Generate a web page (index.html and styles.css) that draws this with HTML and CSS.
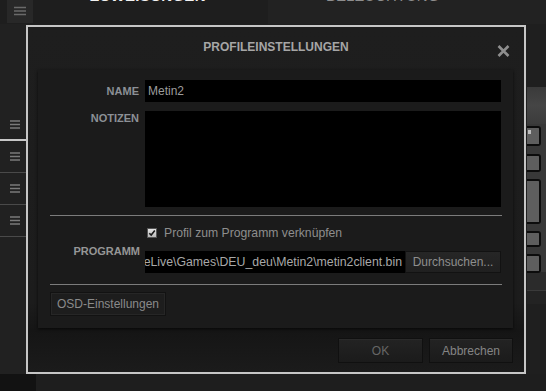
FILE: index.html
```html
<!DOCTYPE html>
<html lang="de">
<head>
<meta charset="utf-8">
<title>Profileinstellungen</title>
<link rel="stylesheet" href="styles.css">
</head>
<body>
<div class="app">
  <header class="tabs">
    <div class="tab tab-left">
      <div class="menu-btn">
        <svg width="12" height="10" viewBox="0 0 12 10"><path d="M0 1.5h12M0 5h12M0 8.5h12" stroke="#6a6a6a" stroke-width="1.6"/></svg>
      </div>
      <span class="tab-title active">ZUWEISUNGEN</span>
    </div>
    <div class="tab tab-right">
      <span class="tab-title">BELEUCHTUNG</span>
    </div>
  </header>
  <div class="workspace">
    <nav class="sidebar">
      <div class="side-item selected"><svg width="10" height="9" viewBox="0 0 10 9"><path d="M0 1h10M0 4.5h10M0 8h10" stroke="#7a7a7a" stroke-width="1.5"/></svg></div>
      <div class="side-item"><svg width="10" height="9" viewBox="0 0 10 9"><path d="M0 1h10M0 4.5h10M0 8h10" stroke="#7a7a7a" stroke-width="1.5"/></svg></div>
      <div class="side-item"><svg width="10" height="9" viewBox="0 0 10 9"><path d="M0 1h10M0 4.5h10M0 8h10" stroke="#7a7a7a" stroke-width="1.5"/></svg></div>
      <div class="side-item"><svg width="10" height="9" viewBox="0 0 10 9"><path d="M0 1h10M0 4.5h10M0 8h10" stroke="#7a7a7a" stroke-width="1.5"/></svg></div>
    </nav>
    <main class="canvas">
      <div class="kbd">
        <div class="kbd-top"></div>
        <div class="kbd-keys">
          <div class="key k1"><span class="key-mark"></span></div>
          <div class="key k2"></div>
          <div class="key k3"></div>
          <div class="key k4"></div>
          <div class="key k5"></div>
        </div>
        <div class="kbd-base"></div>
        <div class="kbd-foot"></div>
      </div>
    </main>
  </div>
  <footer class="statusbar"><div class="status-left"></div></footer>
</div>

<div class="dialog">
  <div class="dlg-title">
    PROFILEINSTELLUNGEN
    <svg class="close" width="13" height="12" viewBox="0 0 13 12"><path d="M1.5 1L11.5 11M11.5 1L1.5 11" stroke="#8e8e8e" stroke-width="2.6"/></svg>
  </div>
  <div class="panel">
    <div class="grid">
      <label class="lbl lbl-mid">NAME</label>
      <div class="field name-field">Metin2</div>
      <label class="lbl lbl-top">NOTIZEN</label>
      <div class="field notes-field"></div>
    </div>
    <div class="sep sep1"></div>
    <div class="grid prog-grid">
      <label class="lbl lbl-span">PROGRAMM</label>
      <div class="check-row">
        <span class="checkbox"><svg width="8" height="8" viewBox="0 0 8 8"><path d="M1.3 4.2L3.2 6.1L6.8 1.6" stroke="#1a1a1a" stroke-width="1.6" fill="none"/></svg></span>
        <span class="check-label">Profil zum Programm verknüpfen</span>
      </div>
      <div class="path-row">
        <div class="field path-field"><span class="path-text">C:\Program Files (x86)\GameforgeLive\Games\DEU_deu\Metin2\metin2client.bin</span></div>
        <div class="btn browse">Durchsuchen...</div>
      </div>
    </div>
    <div class="sep sep2"></div>
    <div class="btn osd">OSD-Einstellungen</div>
  </div>
  <div class="dlg-footer">
    <div class="btn foot-btn ok">OK</div>
    <div class="btn foot-btn cancel">Abbrechen</div>
  </div>
</div>
</body>
</html>
```
FILE: styles.css
```css
* { box-sizing: border-box; }
html, body {
  margin: 0;
  padding: 0;
  width: 546px;
  height: 391px;
  overflow: hidden;
  background: #202020;
  font-family: "Liberation Sans", Arial, sans-serif;
}
.app {
  display: flex;
  flex-direction: column;
  height: 391px;
}
.tabs {
  display: flex;
  height: 24px;
  flex: none;
}
.tab {
  display: flex;
  align-items: flex-start;
  overflow: hidden;
}
.tab-left {
  width: 268px;
  background: #1e1e1e;
}
.tab-right {
  flex: 1;
  background: #222222;
}
.menu-btn {
  width: 26px;
  height: 23px;
  margin-left: 7px;
  background: #282828;
  display: flex;
  justify-content: center;
  padding-top: 6px;
}
.tab-title {
  font-size: 15px;
  line-height: 15px;
  margin-top: -12px;
  color: #8e8e8e;
  white-space: nowrap;
}
.tab-left .tab-title {
  margin-left: 57px;
  font-weight: bold;
  color: #f2f2f2;
  letter-spacing: 0.3px;
}
.tab-right .tab-title {
  margin-left: 58px;
}
.workspace {
  flex: 1;
  display: flex;
  min-height: 0;
}
.sidebar {
  width: 26px;
  flex: none;
  background: #212121;
  padding-top: 85px;
}
.side-item {
  height: 32px;
  display: flex;
  align-items: center;
  justify-content: center;
  padding-left: 4px;
  border-bottom: 1px solid #4a4a4a;
}
.side-item.selected {
  border-bottom: 2px solid #c8c8c8;
}
.canvas {
  flex: 1;
  background: #1f1f1f;
  display: flex;
  justify-content: flex-end;
}
.kbd {
  width: 19px;
  margin-top: 63px;
  display: flex;
  flex-direction: column;
}
.kbd-top {
  height: 37px;
  background: linear-gradient(180deg, #3a3a3a, #454545 50%, #3c3c3c);
}
.kbd-keys {
  background: #383838;
  padding-top: 2px;
  height: 148px;
}
.key {
  position: relative;
  width: 14px;
  background: #5e5e5e;
  border: 2px solid #0c0c0c;
  border-left: none;
  border-radius: 0 3px 3px 0;
}
.key-mark {
  position: absolute;
  left: 1px;
  top: 2px;
  width: 3px;
  height: 4px;
  background: #bdbdbd;
}
.k1 { height: 20px; }
.k2 { height: 18px; margin-top: 8px; }
.k3 { height: 45px; margin-top: 7px; }
.k4 { height: 16px; margin-top: 7px; }
.k5 { height: 19px; margin-top: 7px; }
.kbd-base {
  height: 19px;
  background: #2b2b2b;
  border-bottom: 1px solid #3a3a3a;
}
.kbd-foot {
  height: 13px;
  background: #232323;
}
.statusbar {
  height: 17px;
  flex: none;
  background: #1e1e1e;
  display: flex;
}
.status-left {
  width: 36px;
  background: #121212;
}

/* dialog */
.dialog {
  position: absolute;
  left: 26px;
  top: 25px;
  width: 500px;
  height: 349px;
  border: 2px solid #c6c6c6;
  background: linear-gradient(180deg, #1e1e1e 0%, #1c1c1c 80%, #151515 88%, #1b1b1b 100%);
  display: flex;
  flex-direction: column;
}
.dlg-title {
  position: relative;
  height: 43px;
  line-height: 40px;
  text-align: center;
  font-size: 12px;
  font-weight: bold;
  color: #a6a6a6;
  flex: none;
}
.close {
  position: absolute;
  right: 14px;
  top: 18px;
}
.panel {
  margin: 0 11px 0 10px;
  height: 258px;
  background: #1b1b1b;
  box-shadow: 0 1px 3px rgba(0,0,0,0.7);
  padding: 10px 12px 0 0;
  display: flex;
  flex-direction: column;
}
.grid {
  display: grid;
  grid-template-columns: 101px 1fr;
  column-gap: 6px;
  row-gap: 9px;
}
.lbl {
  font-size: 11px;
  font-weight: bold;
  color: #8c9096;
  text-align: right;
  line-height: 14px;
}
.lbl-mid { align-self: center; }
.lbl-top { align-self: start; }
.field {
  background: #000;
  color: #9c9c9c;
  font-size: 12px;
  height: 22px;
  line-height: 22px;
  padding-left: 3px;
}
.notes-field { height: 96px; }
.sep {
  height: 1px;
  background: #7c7c7c;
  margin-left: 12px;
  margin-right: -1px;
}
.sep1 { margin-top: 8px; }
.sep2 { margin-top: 11px; }
.prog-grid {
  margin-top: 10px;
  row-gap: 11px;
}
.lbl-span {
  grid-row: 1 / span 2;
  align-self: center;
  color: #969696;
  padding-top: 2px;
  margin-right: -1px;
}
.check-row {
  display: flex;
  align-items: center;
  height: 14px;
  gap: 7px;
  padding-left: 2px;
}
.checkbox {
  width: 10px;
  height: 10px;
  background: linear-gradient(180deg, #e4e4e4, #b9b9b9);
  border: 1px solid #555;
  display: flex;
  align-items: center;
  justify-content: center;
}
.check-label {
  font-size: 12.2px;
  color: #8e8e8e;
  white-space: nowrap;
}
.path-row {
  display: flex;
  height: 22px;
}
.path-field {
  width: 260px;
  display: flex;
  justify-content: flex-end;
  overflow: hidden;
  padding: 0 3px 0 0;
  color: #a8a8a8;
  font-size: 12.3px;
}
.path-text { white-space: nowrap; flex: none; }
.btn {
  font-size: 12px;
  color: #8a8a8a;
  background: linear-gradient(180deg, #262626, #202020);
  border: 1px solid #121212;
  display: flex;
  align-items: center;
  justify-content: center;
  white-space: nowrap;
}
.browse {
  flex: 1;
  height: 22px;
  color: #8e8e8e;
}
.osd {
  margin-top: 7px;
  margin-left: 12px;
  width: 116px;
  height: 24px;
  background: #1d1d1d;
  box-shadow: inset 0 0 0 1px #262626;
  color: #8a8a8a;
}
.dlg-footer {
  display: flex;
  justify-content: flex-end;
  gap: 6px;
  padding: 10px 11px 0 0;
}
.foot-btn {
  height: 25px;
  background: linear-gradient(180deg, #232323, #1b1b1b);
  border: 1px solid #101010;
  box-shadow: inset 0 1px 0 #2a2a2a;
}
.ok { width: 85px; color: #666; }
.cancel { width: 84px; color: #858585; }
```
